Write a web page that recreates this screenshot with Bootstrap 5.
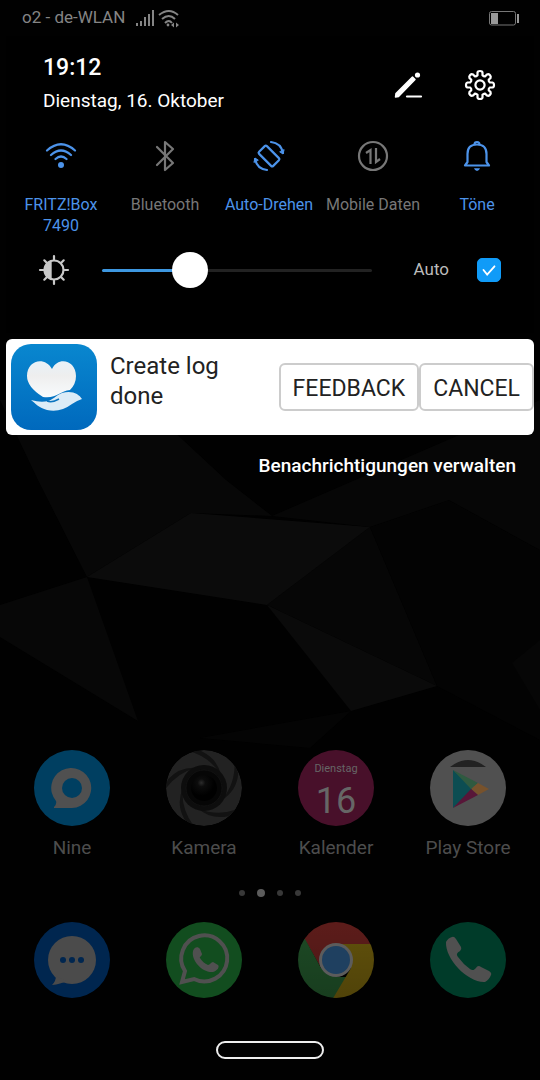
<!DOCTYPE html>
<html lang="de" data-bs-theme="dark">
<head>
<meta charset="utf-8">
<meta name="viewport" content="width=device-width, initial-scale=1">
<title>Benachrichtigungen</title>
<link href="https://cdn.jsdelivr.net/npm/bootstrap@5.3.0/dist/css/bootstrap.min.css" rel="stylesheet">
<style>
  body {
    font-family: Roboto, "Liberation Sans", sans-serif;
    color: #fff;
    background: #010101 url("data:image/svg+xml,%3Csvg xmlns='http://www.w3.org/2000/svg' viewBox='0 0 540 1080' preserveAspectRatio='xMidYMid slice'%3E%3Cpath fill='%23070707' d='M0 400H140L226 480 272 516 191 513 87 577 38 480z'/%3E%3Cpath fill='%230b0b0b' d='M87 577 191 513 370 527 267 605z'/%3E%3Cpath fill='%23060606' d='M370 527 437 686 267 605z'/%3E%3Cpath fill='%230a0a0a' d='M267 605 437 686 351 711z'/%3E%3Cpath fill='%23030303' d='M370 527 449 500 540 550V740L437 686z'/%3E%3Cpath fill='%23060606' d='M272 516 540 400V550L449 500 370 527z'/%3E%3Cpath fill='%23070707' d='M0 605 87 577 138 721 0 637z'/%3E%3Cpath fill='%23040404' d='M200 738 351 711 310 748z'/%3E%3Cpath fill='%23060606' d='M540 640 512 663 540 710z'/%3E%3C/svg%3E") center / cover no-repeat;
  }
  .status-bar { height: 36px; padding: 0 20px 0 22px; font-size: 17px; color: #858585; }
  .panel { margin: 0 6px; padding-bottom: 45px; background: #000; }
  .panel-head { padding: 16px 38px 0 37px; }
  .head-actions { gap: 40px; }
  .clock { font-size: 23px; line-height: 32px; font-weight: 500; }
  .date { font-size: 19px; line-height: 34px; }
  .icon-btn, .tile { background: none; border: 0; padding: 0; color: #fff; }
  .tiles { padding: 0 5px 0 3px; margin-top: 22px; min-height: 112px; }
  .tile { font-size: 16px; line-height: 21px; color: #777; }
  .tile.on { color: #4c93ea; }
  .tile svg { margin-bottom: 22px; }
  .tile-label { max-width: 96px; }
  .bright { padding: 0 33px 0 32px; height: 36px; }
  .slider { appearance: none; min-width: 0; height: 36px; background: none; margin: 0 42px 0 32px; }
  .slider::-webkit-slider-runnable-track {
    height: 3px; border-radius: 2px;
    background: linear-gradient(to right, #3d97e0 var(--level), #222 var(--level));
  }
  .slider::-webkit-slider-thumb {
    appearance: none; width: 36px; height: 36px; margin-top: -17px;
    border-radius: 50%; background: #fff;
  }
  .auto-label { margin-right: 28px; font-size: 17px; color: #bbb; }
  .auto-box.form-check-input { width: 24px; height: 24px; margin: 0; border-radius: 5px; }
  .auto-box.form-check-input:checked {
    border-color: #109bf8;
    background: #109bf8 url("data:image/svg+xml,%3Csvg xmlns='http://www.w3.org/2000/svg' viewBox='0 0 24 24'%3E%3Cpath fill='none' stroke='%23fff' stroke-width='2' stroke-linecap='round' d='m6 12 4 5 8-9'/%3E%3C/svg%3E") center / cover;
  }
  .notice { margin: 6px 6px 0; min-height: 96px; background: #fff; border-radius: 6px; color: #222; font-size: 24px; }
  .notice-text { line-height: 30px; padding: 12px 0 0 12px; }
  .notice-btn { height: 48px; padding: 4px 12px 0; font-size: 23px; color: #222; background: #fff; border: 2px solid #ccc; border-radius: 6px; }
  .manage { margin: 16px 24px 0; font-size: 19px; line-height: 30px; font-weight: 500; color: #fff; }
  .apps { padding: 0 6px; font-size: 19px; line-height: 24px; }
  .apps a { color: #4d4d4d; }
  .app-name { margin-top: 10px; }
  .dots { gap: 12px; height: 12px; margin: 27px 0 23px; }
  .dot { width: 6px; height: 6px; border-radius: 50%; background: #383838; }
  .dot.now { width: 8px; height: 8px; background: #5c5c5c; }
  .home-key { width: 108px; height: 18px; margin: 43px 0 21px; border: 2px solid #eee; border-radius: 9px; background: none; padding: 0; }
</style>
</head>
<body>
<svg width="0" height="0" class="position-absolute" aria-hidden="true">
  <defs>
    <linearGradient id="shade" x2="0" y2="1"><stop stop-color="#000" stop-opacity="0"/><stop offset="1" stop-color="#000" stop-opacity=".35"/></linearGradient>
    <linearGradient id="care" x2="0" y2="1"><stop stop-color="#0987cf"/><stop offset="1" stop-color="#0069bd"/></linearGradient>
    <linearGradient id="heart" x2="0" y2="1"><stop stop-color="#e8f1f8"/><stop offset=".4" stop-color="#eee"/><stop offset="1" stop-color="#f8fbfd"/></linearGradient>
    <radialGradient id="lens" cx=".4" cy=".3"><stop stop-color="#2c2c2c"/><stop offset=".3" stop-color="#0c0c0c"/><stop offset="1" stop-color="#000"/></radialGradient>
    <clipPath id="disc"><circle cx="39" cy="38" r="38"/></clipPath>
  </defs>
</svg>
<div class="min-vh-100 d-flex flex-column">
  <header class="status-bar d-flex align-items-center">
    <span>o2 - de-WLAN</span>
    <svg class="ms-2" width="46" height="20" viewBox="0 0 46 20" fill="none" stroke="#858585" stroke-width="2" aria-hidden="true">
      <path d="M4 18v-3M8 18v-5M12 18V9M16 18V6M20 18V2"/>
      <path d="M26 7q10-8 19 0M29 11q7-6 13 0M32 15q4-4 7 0"/><circle cx="35" cy="17" r="1.4" fill="#858585" stroke="none"/>
      <path d="m41 14.500-3 2.500 3 2.500zM43 14.500l3 2.500-3 2.500z" fill="#858585" stroke="none"/>
    </svg>
    <svg class="ms-auto" width="31" height="15" viewBox="0 0 31 15" aria-hidden="true"><rect x=".5" y=".5" width="26" height="13.500" rx="2" fill="none" stroke="#777"/><path fill="#999" d="M2 2h7v11H2zM28 3h2v9h-2z"/></svg>
  </header>

  <section class="panel">
    <div class="panel-head d-flex justify-content-between align-items-center">
      <div>
        <div class="clock">19:12</div>
        <div class="date">Dienstag, 16. Oktober</div>
      </div>
      <div class="head-actions d-flex align-items-center">
        <button class="icon-btn d-flex" aria-label="Bearbeiten"><svg width="32" height="32" viewBox="0 0 32 32"><path d="m3.500 28 .5-3.500L20.500 8l2.500 2.500L6.500 27.500z" fill="#fff" stroke="#fff" stroke-width="1.500" stroke-linejoin="round"/><circle cx="25.500" cy="6" r="2.600" fill="#fff"/><path d="M15 27.500h14" stroke="#fff" stroke-width="2.200" stroke-linecap="round"/></svg></button>
        <button class="icon-btn d-flex" aria-label="Einstellungen"><svg width="32" height="32" viewBox="-16 -16 32 32" fill="none" stroke="#fff" stroke-width="2.200" stroke-linejoin="round"><circle r="4.600"/><path d="M-2.500-9.800V-12.500Q-2.200-14 0-14T2.500-12.500V-9.800Q3.800-8.400 5.200-8.700L7.100-10.600Q8.600-11.200 9.900-9.900T10.600-7.100L8.700-5.200Q8.400-3.800 9.800-2.500H12.500Q14-2.200 14 0T12.500 2.500H9.800Q8.400 3.800 8.700 5.200L10.600 7.100Q11.200 8.600 9.900 9.900T7.100 10.600L5.200 8.700Q3.800 8.400 2.500 9.800V12.500Q2.200 14 0 14T-2.500 12.500V9.800Q-3.800 8.400-5.200 8.700L-7.100 10.600Q-8.600 11.200-9.900 9.900T-10.600 7.100L-8.700 5.200Q-8.400 3.800-9.800 2.500H-12.500Q-14 2.200-14 0T-12.500-2.500H-9.800Q-8.400-3.800-8.700-5.200L-10.600-7.100Q-11.200-8.600-9.900-9.900T-7.100-10.600L-5.200-8.700Q-3.800-8.400-2.500-9.800Z"/></svg></button>
      </div>
    </div>

    <div class="tiles row row-cols-5 g-0 align-items-start">
      <button class="tile on col d-flex flex-column align-items-center">
        <svg width="32" height="32" viewBox="0 0 32 32" fill="none" stroke="currentColor" stroke-width="2.200" stroke-linecap="round"><path d="M2 10.500q14-12.500 28 0M6 15q10-9 20 0M10.500 19q5.500-5 11 0"/><circle cx="16" cy="25" r="3" fill="currentColor" stroke="none"/></svg>
        <span class="tile-label">FRITZ!Box 7490</span>
      </button>
      <button class="tile col d-flex flex-column align-items-center">
        <svg width="32" height="32" viewBox="0 0 32 32" fill="none" stroke="currentColor" stroke-width="2.200" stroke-linejoin="round" stroke-linecap="round"><path d="m8 7 16 16-8 7V2l8 7L8 25"/></svg>
        <span class="tile-label text-nowrap">Bluetooth</span>
      </button>
      <button class="tile on col d-flex flex-column align-items-center">
        <svg width="32" height="32" viewBox="0 0 32 32" fill="none" stroke="currentColor" stroke-width="2.200" stroke-linecap="round"><rect x="10.500" y="6" width="11" height="20" rx="1.500" transform="rotate(-45 16 16)"/><path d="M18 2q10 1 12 11M14 30Q4 29 2 19"/><path d="m27 12 3 2 1-4zM5 20l-3-2-1 4z" fill="currentColor" stroke-width="1"/></svg>
        <span class="tile-label text-nowrap">Auto-Drehen</span>
      </button>
      <button class="tile col d-flex flex-column align-items-center">
        <svg width="32" height="32" viewBox="0 0 32 32" fill="none" stroke="currentColor" stroke-width="2.200"><circle cx="16" cy="16" r="14"/><path d="M13.500 24V10L9 13M19 8v14l4-3"/></svg>
        <span class="tile-label text-nowrap">Mobile Daten</span>
      </button>
      <button class="tile on col d-flex flex-column align-items-center">
        <svg width="32" height="32" viewBox="0 0 32 32" fill="none" stroke="currentColor" stroke-width="2.200" stroke-linejoin="round"><path d="M6.500 22V14q0-9.500 9.500-9.500T25.500 14v8l2.500 3.500H4z"/><path d="M13.500 4.500q0-2.500 2.500-2.500t2.500 2.500"/><path d="M13 28.300h6q-1 2.700-3 2.700t-3-2.700z" fill="currentColor" stroke="none"/></svg>
        <span class="tile-label text-nowrap">Töne</span>
      </button>
    </div>

    <div class="bright d-flex align-items-center">
      <svg class="flex-shrink-0" width="32" height="32" viewBox="-16 -16 32 32" fill="none" stroke="#c8c8c8" stroke-width="2.200" stroke-linecap="round" aria-hidden="true"><circle r="9.500"/><path d="M-3-9.400A10 10 0 0 0-3 9.400z" fill="#c8c8c8" stroke="none"/><path d="M-3-9V9" stroke-width="1.400"/><path d="M0-10.500V-14M0 10.500V14M-10.500 0H-14M10.500 0H14M-7-7l-2.700-2.700M7-7l2.700-2.700M-7 7l-2.700 2.700M7 7l2.700 2.700"/></svg>
      <input type="range" class="slider flex-grow-1" min="0" max="100" value="30" aria-label="Helligkeit" style="--level: 32%">
      <label class="auto-label" for="auto">Auto</label>
      <input type="checkbox" class="form-check-input auto-box flex-shrink-0" id="auto" checked>
    </div>
  </section>

  <section class="notice d-flex align-items-center overflow-hidden">
    <svg class="flex-shrink-0 ms-1" width="88" height="88" viewBox="0 0 88 88" aria-hidden="true">
      <rect x="1" y="1" width="86" height="86" rx="20" fill="url(#care)"/>
      <path d="M33 54Q17 44 17 33c0-16 18-20 25-7 6-13 24-9 24 7q0 8-6 14c-10 1-14 9-27 7z" fill="url(#heart)"/>
      <path d="M21 57q10 3 17 1c5-1 8-6 14-8 10-3 17 1 20 6q-6 2-10 5-12 9-25 6c-8-2-12-7-16-10z" fill="#dcecf7"/>
      <path d="M37 58q5 2 12-2" fill="none" stroke="#0b74bf" stroke-width="1.500"/>
    </svg>
    <div class="notice-text align-self-start flex-grow-1">Create log<br>done</div>
    <button class="notice-btn flex-shrink-0">FEEDBACK</button>
    <button class="notice-btn flex-shrink-0">CANCEL</button>
  </section>

  <a href="#" class="manage align-self-end text-decoration-none">Benachrichtigungen verwalten</a>

  <main class="mt-auto">
    <div class="apps row row-cols-4 g-0 text-center">
      <a href="#" class="col text-decoration-none">
        <svg width="78" height="76" viewBox="0 0 78 76"><circle cx="39" cy="38" r="38" fill="#003f61"/><path d="M21 57q3-3 2-6a20 20 0 1 1 16 7H21z" fill="#505050"/><circle cx="39" cy="38" r="10" fill="#003f61"/></svg>
        <div class="app-name">Nine</div>
      </a>
      <a href="#" class="col text-decoration-none">
        <svg width="78" height="76" viewBox="0 0 78 76"><g clip-path="url(#disc)"><circle cx="39" cy="38" r="38" fill="#222"/><g fill="#121212"><path id="blade" d="M24 1h12q16 7 20 24Q45 7 24 1z"/><use href="#blade" transform="rotate(72 39 38)"/><use href="#blade" transform="rotate(144 39 38)"/><use href="#blade" transform="rotate(216 39 38)"/><use href="#blade" transform="rotate(288 39 38)"/></g><circle cx="39" cy="38" r="23" fill="#0d0d0d"/><circle cx="39" cy="38" r="18" fill="#060606" stroke="#121212"/><circle cx="39" cy="38" r="13" fill="url(#lens)"/></g></svg>
        <div class="app-name">Kamera</div>
      </a>
      <a href="#" class="col text-decoration-none">
        <svg width="78" height="76" viewBox="0 0 78 76"><circle cx="39" cy="38" r="38" fill="#48102a"/><text x="39" y="22" font-size="11" text-anchor="middle" fill="#666">Dienstag</text><text x="39" y="63" font-size="36" text-anchor="middle" fill="#666">16</text></svg>
        <div class="app-name">Kalender</div>
      </a>
      <a href="#" class="col text-decoration-none">
        <svg width="78" height="76" viewBox="0 0 78 76"><circle cx="39" cy="38" r="38" fill="#505050"/><path d="M21 17q18-14 36 0z" fill="#222"/><path d="M24 20 45 39 24 58z" fill="#0c4d52"/><path d="m24 20 25 13-7 6z" fill="#2f5a40"/><path d="m49 33 11 6-11 6-7-6z" fill="#77522c"/><path d="m24 58 25-13-7-6z" fill="#581638"/></svg>
        <div class="app-name">Play Store</div>
      </a>
    </div>

    <div class="dots d-flex justify-content-center align-items-center">
      <span class="dot"></span><span class="dot now"></span><span class="dot"></span><span class="dot"></span>
    </div>

    <div class="apps row row-cols-4 g-0 text-center">
      <a href="#" class="col d-flex justify-content-center" aria-label="Nachrichten">
        <svg width="78" height="76" viewBox="0 0 78 76"><circle cx="39" cy="38" r="38" fill="#00264f"/><circle cx="39" cy="38" r="24" fill="#4b4b4b"/><path d="M23 54q0 5-4 9 9-1 14-4z" fill="#4b4b4b"/><g fill="#00264f"><circle cx="30" cy="38" r="3"/><circle cx="39" cy="38" r="3"/><circle cx="48" cy="38" r="3"/></g></svg>
      </a>
      <a href="#" class="col d-flex justify-content-center" aria-label="WhatsApp">
        <svg width="78" height="76" viewBox="0 0 78 76"><circle cx="39" cy="38" r="38" fill="#124d1f"/><path d="M17 60 20 49a23 23 0 1 1 9 8z" fill="none" stroke="#505050" stroke-width="4"/><path d="M28 29c1-4 5-5 7-2l2 5c0 2-3 3-2 4q3 5 8 7c2 0 3-3 5-3l5 3c2 2-1 6-5 7-11 1-22-12-20-21z" fill="#505050"/></svg>
      </a>
      <a href="#" class="col d-flex justify-content-center" aria-label="Chrome">
        <svg width="78" height="76" viewBox="0 0 78 76"><g clip-path="url(#disc)"><path d="M0 0h78v22H39L24 46 8 18z" fill="#5c1c1a"/><path d="M8 17 24 46 39 55H52L36 78H0V17z" fill="#1d4a25"/><path d="M39 22h39v56H35L54 46z" fill="#61510b"/><path d="M0 0h78v76H0z" fill="url(#shade)" opacity=".5"/></g><circle cx="39" cy="38" r="17" fill="#5c5c5c"/><circle cx="39" cy="38" r="14" fill="#1f4060"/></svg>
      </a>
      <a href="#" class="col d-flex justify-content-center" aria-label="Telefon">
        <svg width="78" height="76" viewBox="0 0 78 76"><circle cx="39" cy="38" r="38" fill="#003b29"/><path d="M17 20q2-4 6-5 2-1 4 2l5 8q1 2-1 4c-3 2-4 3-2 6q5 7 12 12c3 2 4 1 6-1 1-2 3-3 5-1l8 4q3 2 2 4-2 5-6 7C39 61 16 37 17 20z" fill="#505050"/></svg>
      </a>
    </div>
    <div class="d-flex justify-content-center"><button class="home-key" aria-label="Startbildschirm"></button></div>
  </main>
</div>
<script src="https://cdn.jsdelivr.net/npm/bootstrap@5.3.0/dist/js/bootstrap.bundle.min.js"></script>
</body>
</html>
